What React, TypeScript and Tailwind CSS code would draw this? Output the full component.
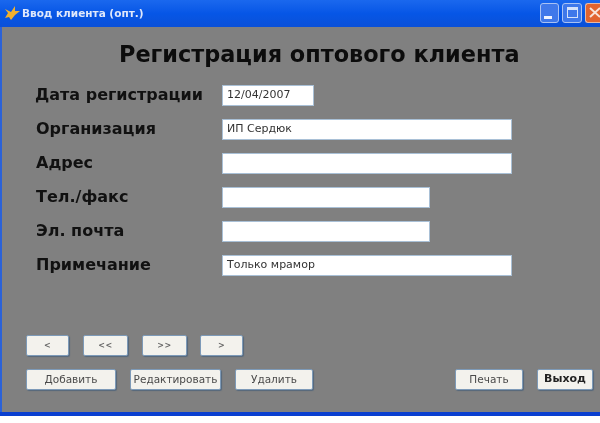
const fields = [
  { label: "Дата регистрации", value: "12/04/2007", w: "w-[92px]", lx: "ml-[35px]", lw: "w-[187px]" },
  { label: "Организация", value: "ИП Сердюк", w: "w-[290px]", lx: "ml-[36px]", lw: "w-[186px]" },
  { label: "Адрес", value: "", w: "w-[290px]", lx: "ml-[36px]", lw: "w-[186px]" },
  { label: "Тел./факс", value: "", w: "w-[208px]", lx: "ml-[36px]", lw: "w-[186px]" },
  { label: "Эл. почта", value: "", w: "w-[208px]", lx: "ml-[36px]", lw: "w-[186px]" },
  { label: "Примечание", value: "Только мрамор", w: "w-[290px]", lx: "ml-[36px]", lw: "w-[186px]" },
];

function Btn({ children, w, kind }: { children: React.ReactNode; w: string; kind?: "bold" | "nav" }) {
  const text =
    kind === "bold"
      ? "font-bold text-[11px] text-[#222222]"
      : kind === "nav"
        ? "font-bold text-[8px] tracking-[0.5px] text-[#666666]"
        : "text-[10.5px] text-[#4a4a4a]";
  return (
    <div
      className={`${w} h-[21px] flex items-center justify-center rounded-[2px] border border-[#7d9ab8] bg-[#f3f2ed] shadow-[1px_1px_1px_#55687c] whitespace-nowrap ${text}`}
    >
      {children}
    </div>
  );
}

export default function App() {
  return (
    <div className="w-[600px] h-[423px] bg-white overflow-hidden font-['DejaVu_Sans',Arial,sans-serif] blur-[0.6px]">
      <div className="h-[416px] flex flex-col border-b-[4px] border-[#0a3fd0]">
        <div className="h-[27px] shrink-0 flex items-center bg-gradient-to-b from-[#1a68ee] via-[#0656e6] to-[#0a50d8] pl-[4px]">
          <svg width="17" height="17" viewBox="0 0 17 17" className="shrink-0">
            <path d="M1 4 L7 7 L11 1 L11 6 L16 6 L11 10 L7 15 L5 12 L1 13 L4 8 Z" fill="#f0b02e" />
          </svg>
          <span className="ml-[1px] text-[10.5px] font-bold text-[#dfe8fb] whitespace-nowrap">Ввод клиента (опт.)</span>
          <div className="ml-auto flex gap-[3px] pb-[2px]">
            <div className="w-[19px] h-[20px] rounded-[3px] border border-[#a9c2f4] bg-[#3f78ea] flex items-end pl-[3px] pb-[3px]">
              <div className="w-[8px] h-[3px] bg-[#eef3ff]" />
            </div>
            <div className="w-[20px] h-[20px] rounded-[3px] border border-[#a9c2f4] bg-[#3f78ea] flex items-center justify-center">
              <div className="w-[11px] h-[11px] border border-[#d5e2fb] border-t-[3px]" />
            </div>
            <div className="w-[15px] h-[20px] rounded-l-[3px] border border-r-0 border-[#e6b8a4] bg-[#e2642f] overflow-hidden flex items-center pl-[3px]">
              <svg width="12" height="11" viewBox="0 0 12 11" className="shrink-0">
                <path d="M1 1 L11 10 M11 1 L1 10" stroke="#f8e2d6" strokeWidth="2" />
              </svg>
            </div>
          </div>
        </div>

        <div className="flex-1 flex flex-col bg-[#808080] border-l-[2px] border-[#2b62d8]">
          <h1 className="-ml-[2px] mt-[12px] pl-[119px] text-[22.4px] leading-[30px] font-bold text-[#0c0c0c] whitespace-nowrap">
            Регистрация оптового клиента
          </h1>
          <div className="-ml-[2px] mt-[16px] flex flex-col gap-[14px]">
            {fields.map((f) => (
              <div key={f.label} className="flex items-center h-[20px]">
                <div className={`${f.lx} ${f.lw} text-[16px] font-bold text-[#111111] whitespace-nowrap`}>{f.label}</div>
                <div className={`${f.w} h-[21px] bg-white border border-[#a9c0d6] flex items-center pl-[4px] text-[11px] text-[#333333] whitespace-nowrap`}>{f.value}</div>
              </div>
            ))}
          </div>
          <div className="-ml-[2px] mt-[60px] pl-[26px] flex gap-[14px]">
            <Btn w="w-[43px]" kind="nav">&lt;</Btn>
            <Btn w="w-[45px]" kind="nav">&lt;&lt;</Btn>
            <Btn w="w-[45px]" kind="nav">&gt;&gt;</Btn>
            <Btn w="w-[43px] -ml-px" kind="nav">&gt;</Btn>
          </div>
          <div className="-ml-[2px] mt-[13px] pl-[26px] pr-[7px] flex gap-[14px]">
            <Btn w="w-[90px]">Добавить</Btn>
            <Btn w="w-[91px]">Редактировать</Btn>
            <Btn w="w-[78px]">Удалить</Btn>
            <div className="ml-auto flex gap-[14px]">
              <Btn w="w-[68px]">Печать</Btn>
              <Btn w="w-[56px]" kind="bold">Выход</Btn>
            </div>
          </div>
        </div>
      </div>
    </div>
  );
}
